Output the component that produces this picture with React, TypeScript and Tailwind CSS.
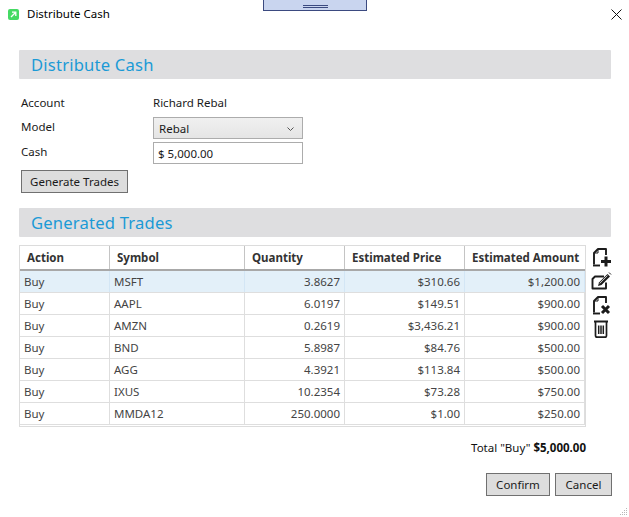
const trades = [
  ['Buy', 'MSFT', '3.8627', '$310.66', '$1,200.00'],
  ['Buy', 'AAPL', '6.0197', '$149.51', '$900.00'],
  ['Buy', 'AMZN', '0.2619', '$3,436.21', '$900.00'],
  ['Buy', 'BND', '5.8987', '$84.76', '$500.00'],
  ['Buy', 'AGG', '4.3921', '$113.84', '$500.00'],
  ['Buy', 'IXUS', '10.2354', '$73.28', '$750.00'],
  ['Buy', 'MMDA12', '250.0000', '$1.00', '$250.00'],
];

const cols = 'grid grid-cols-[90px_135px_100px_120px_120px]';

function SectionHeader({ title }: { title: string }) {
  return (
    <div className="h-[29px] bg-[#dedee0] rounded-[1px] pl-3 pt-[2px] flex items-center text-[16.6px] tracking-[0.2px] text-[#1b9ad6]">
      {title}
    </div>
  );
}

function ToolIcon({ kind }: { kind: 'add' | 'edit' | 'remove' | 'trash' }) {
  if (kind === 'trash') {
    return (
      <svg width="22" height="22" viewBox="0 0 22 22" fill="none" stroke="#1c1c1c" strokeWidth="1.7">
        <path d="M4 3.5h14" strokeWidth="2" />
        <path d="M5.5 4v13.5a1.7 1.7 0 0 0 1.7 1.7h7.6a1.7 1.7 0 0 0 1.7-1.7V4" />
        <path d="M8.7 7.5v8.5M11 7.5v8.5M13.3 7.5v8.5" strokeWidth="1.5" />
      </svg>
    );
  }
  return (
    <svg width="22" height="22" viewBox="0 0 22 22" fill="none" stroke="#1c1c1c" strokeWidth="1.9">
      {kind === 'edit' ? (
        <>
          <path d="M14 6.5H5L2.5 9v9.5h13.5v-6" strokeLinejoin="round" />
          <path d="M8 16l1-3.5L17.5 4l2.5 2.5-8.5 8.5z" fill="#1c1c1c" stroke="none" />
          <path d="M9.7 13.4l7.8-7.8" stroke="#fff" strokeWidth="0.8" />
          <path d="M19 2.5l2 2" strokeWidth="1" />
        </>
      ) : (
        <>
          <path d="M4 18.5V7l4-4h8v6" strokeLinejoin="round" />
          <path d="M8 3v4H4" strokeWidth="1" />
          <path d="M3 19.5h7" />
          {kind === 'add' && <path d="M11 15.5h10M16 10.5v10" strokeWidth="3" />}
          {kind === 'remove' && <path d="M12 12l7 7M19 12l-7 7" strokeWidth="3" />}
        </>
      )}
    </svg>
  );
}

export default function App() {
  return (
    <div className="relative w-[629px] h-[517px] overflow-hidden bg-white text-[11.5px] text-[#1a1a1a] font-['Noto_Sans','Open_Sans',sans-serif]">
      {/* docked handle peeking in at the top */}
      <div className="absolute left-[263px] top-0 w-[104px] h-[11px] bg-[#c9d5ef] border border-t-0 border-[#3b4a80] flex flex-col items-center justify-end pb-[2px] gap-[1px]">
        <div className="w-[25px] h-px bg-[#3b4a80]" />
        <div className="w-[25px] h-px bg-[#3b4a80]" />
      </div>

      {/* Title bar */}
      <div className="h-[28px] flex items-center pl-2 pr-[7px]">
        <div className="w-[11px] h-[11px] rounded-[2px] bg-[#45da64] flex items-center justify-center">
          <svg width="7" height="7" viewBox="0 0 7 7" fill="none" stroke="#fff" strokeWidth="1.3">
            <path d="M1 6l4-4M2 1.2h3.8V5" />
          </svg>
        </div>
        <span className="ml-2 flex-1 text-black">Distribute Cash</span>
        <svg width="11" height="11" viewBox="0 0 11 11" fill="none" stroke="#111" strokeWidth="1">
          <path d="M0.5 0.5l10 10M10.5 0.5l-10 10" />
        </svg>
      </div>

      <div className="pt-[22px] pl-[19px] pr-[18px]">
        <SectionHeader title="Distribute Cash" />

        {/* Form */}
        <div className="pl-[2px] mt-[14px] grid grid-cols-[132px_150px] grid-rows-[auto_22px_22px] items-center gap-y-[3px]">
          <span className="h-[21px] leading-[19px]">Account</span>
          <span className="h-[21px] leading-[19px]">Richard Rebal</span>
          <span className="-mt-[2px]">Model</span>
          <div className="h-[22px] border border-[#acacac] bg-gradient-to-b from-[#f0f0f0] to-[#e5e5e5] flex items-center justify-between pl-[5px] pr-[8px] pt-[1px]">
            <span>Rebal</span>
            <svg width="7" height="4" viewBox="0 0 7 4" fill="none" stroke="#555">
              <path d="M0.5 0.5l3 3 3-3" />
            </svg>
          </div>
          <span className="-mt-[2px]">Cash</span>
          <div className="h-[22px] border border-[#acacac] bg-white flex items-center pl-[4px] pt-[1px]">$ 5,000.00</div>
        </div>
        <button className="mt-[6px] ml-[2px] w-[107px] h-[23px] bg-[#dddddd] border border-[#707070] flex items-center justify-center">
          Generate Trades
        </button>

        <div className="mt-[15px]">
          <SectionHeader title="Generated Trades" />
        </div>

        {/* Trades table with its side tools */}
        <div className="mt-[8px] flex items-start">
          <div className="w-[567px] h-[182px] border border-[#dcdcdc] flex-none">
            <div className={`${cols} h-[25px] border-b-2 border-[#a8a8a8] font-bold text-[#333]`}>
              {['Action', 'Symbol', 'Quantity', 'Estimated Price', 'Estimated Amount'].map((h, i) => (
                <div
                  key={h}
                  className={`pl-[7px] flex items-center whitespace-nowrap ${i < 4 ? 'border-r border-[#c4c4c4]' : ''}`}
                >
                  {h}
                </div>
              ))}
            </div>
            {trades.map((row, i) => (
              <div
                key={row[1]}
                className={`${cols} h-[22px] border-b border-[#dedede] text-[#444] ${i === 0 ? 'bg-[#e3f0f9] border-[#cfe5f5]' : ''}`}
              >
                {row.map((cell, j) => (
                  <div
                    key={j}
                    className={`flex items-center whitespace-nowrap border-r ${
                      i === 0 ? 'border-[#d3e6f5]' : 'border-[#dedede]'
                    } ${j < 2 ? 'pl-[4px]' : 'justify-end pr-[4px]'}`}
                  >
                    {cell}
                  </div>
                ))}
              </div>
            ))}
          </div>
          <div className="ml-[4px] mt-[0.5px] flex flex-col items-center w-[22px] gap-[2px]">
            <ToolIcon kind="add" />
            <ToolIcon kind="edit" />
            <ToolIcon kind="remove" />
            <ToolIcon kind="trash" />
          </div>
        </div>

        {/* Total */}
        <div className="mt-[12px] w-[567px] text-right text-[#111]">
          Total "Buy" <span className="font-bold">$5,000.00</span>
        </div>

        {/* Footer buttons */}
        <div className="mt-[17px] -mr-px flex justify-end gap-[5px]">
          <button className="w-[64px] h-[23px] bg-[#dddddd] border border-[#707070]">Confirm</button>
          <button className="w-[57px] h-[23px] bg-[#dddddd] border border-[#707070]">Cancel</button>
        </div>
      </div>

      {/* resize grip */}
      <svg className="absolute right-[1px] bottom-[1px]" width="10" height="10" viewBox="0 0 10 10" fill="#b8b8b8">
        <rect x="8" y="2" width="1" height="1" />
        <rect x="6" y="4" width="1" height="1" />
        <rect x="8" y="4" width="1" height="1" />
        <rect x="4" y="6" width="1" height="1" />
        <rect x="6" y="6" width="1" height="1" />
        <rect x="8" y="6" width="1" height="1" />
        <rect x="2" y="8" width="1" height="1" />
        <rect x="4" y="8" width="1" height="1" />
        <rect x="6" y="8" width="1" height="1" />
        <rect x="8" y="8" width="1" height="1" />
      </svg>
    </div>
  );
}
